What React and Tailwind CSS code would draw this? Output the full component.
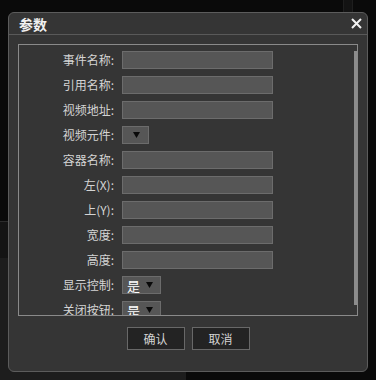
import React from "react";

const font = { fontFamily: '"Noto Sans CJK SC", "Noto Sans", sans-serif' };

function Tri() {
  return (
    <svg width="7" height="6" viewBox="0 0 7 6" className="block">
      <polygon points="0,0 7,0 3.5,6" fill="#0a0a0a" />
    </svg>
  );
}

function TextRow({ label }) {
  return (
    <div className="flex items-center h-[18px] shrink-0">
      <div className="w-[95px] text-right text-[12px] leading-none text-[#d4d4d4] whitespace-nowrap">{label}</div>
      <div className="ml-[8px] w-[151px] h-[18px] bg-[#565656] border border-[#6c6c6c]" />
    </div>
  );
}

function SelectRow({ label, value }) {
  return (
    <div className="flex items-center h-[18px] shrink-0">
      <div className="w-[95px] text-right text-[12px] leading-none text-[#d4d4d4] whitespace-nowrap">{label}</div>
      {value ? (
        <div className="ml-[8px] w-[39px] h-[18px] bg-[#565656] border border-[#6c6c6c] flex items-center pl-[4px] gap-[6px]">
          <span className="text-[13px] leading-none text-white">{value}</span>
          <Tri />
        </div>
      ) : (
        <div className="ml-[8px] w-[27px] h-[18px] bg-[#565656] border border-[#6c6c6c] flex items-center justify-center pl-[2px]">
          <Tri />
        </div>
      )}
    </div>
  );
}

export default function App() {
  return (
    <div className="relative w-[376px] h-[380px] overflow-hidden bg-[#0a0a0a]" style={font}>
      {/* background page behind modal */}
      <div className="absolute left-[343px] top-0 w-[10px] h-[14px] bg-[#131313] border-x border-[#1e1e1e]" />
      <div className="absolute left-0 top-[221px] w-[186px] h-[159px] flex flex-col">
        <div className="h-[1px] bg-[#2c2c2c]" />
        <div className="h-[36px] bg-[#141414]" />
        <div className="flex-1 bg-[#1d1d1d]" />
      </div>

      {/* modal */}
      <div className="absolute left-[8px] top-[12px] w-[360px] h-[360px] bg-[#353535] border border-[#5c5c5c] rounded-[6px] flex flex-col">
        <div className="h-[22px] shrink-0 border-b border-[#595959] flex items-center justify-between pl-[10px] pr-[5px]">
          <span className="text-[14px] font-bold leading-none text-[#f0f0f0]">参数</span>
          <svg width="11" height="11" viewBox="0 0 11 11" className="block">
            <path d="M1 1 L10 10 M10 1 L1 10" stroke="#f2f2f2" strokeWidth="2" />
          </svg>
        </div>
        <div className="mx-[9px] mt-[9px] h-[272px] shrink-0 border border-[#8a8a8a] relative overflow-hidden">
          <div className="flex flex-col gap-[7px] pt-[6px]">
            <TextRow label="事件名称:" />
            <TextRow label="引用名称:" />
            <TextRow label="视频地址:" />
            <SelectRow label="视频元件:" />
            <TextRow label="容器名称:" />
            <TextRow label="左(X):" />
            <TextRow label="上(Y):" />
            <TextRow label="宽度:" />
            <TextRow label="高度:" />
            <SelectRow label="显示控制:" value="是" />
            <SelectRow label="关闭按钮:" value="是" />
          </div>
          <div className="absolute right-[-1px] top-[6px] bottom-[10px] w-[4px] bg-[#8c8c8c]" />
        </div>
        <div className="mt-[11px] flex justify-center gap-[7px]">
          <div className="w-[58px] h-[23px] bg-[#232323] border border-[#686868] flex items-center justify-center text-[12px] leading-none text-[#d4d4d4]">确认</div>
          <div className="w-[58px] h-[23px] bg-[#232323] border border-[#686868] flex items-center justify-center text-[12px] leading-none text-[#d4d4d4]">取消</div>
        </div>
      </div>
    </div>
  );
}
